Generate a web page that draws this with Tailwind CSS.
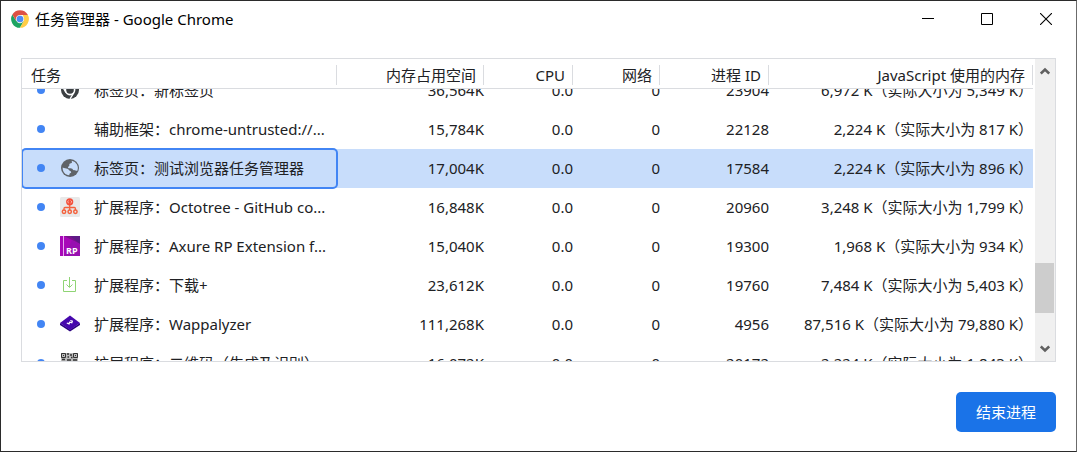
<!DOCTYPE html>
<html lang="zh-CN">
<head>
<meta charset="utf-8">
<title>任务管理器 - Google Chrome</title>
<script src="https://cdn.jsdelivr.net/npm/@tailwindcss/browser@4"></script>
</head>
<body class="flex min-h-screen flex-col border border-[#2b2b2b] border-r-[#6b6b6b] bg-white font-['Noto_Sans','Noto_Sans_CJK_SC',sans-serif] text-[15px] leading-5 text-[#202124]">
<header class="flex h-9 items-center justify-between pl-2.5 text-black">
  <h1 class="flex items-center gap-1.5">
    <svg class="size-[18px]" viewBox="0 0 48 48" aria-hidden="true">
      <circle cx="24" cy="24" r="23.5" fill="#fff"/>
      <path d="M3.6 12.2A23.5 23.5 0 0 0 24 47.5L34 30 24 24 14 29.5z" fill="#1da462"/>
      <path d="M44.4 12.2A23.5 23.5 0 0 1 24 47.5L34 29.5 32 13z" fill="#ffcd46"/>
      <path d="M3.6 12.2A23.5 23.5 0 0 1 44.4 12.2L44 13H24L14 29.5z" fill="#dd5144"/>
      <circle cx="24" cy="24" r="11" fill="#f1f1f1"/>
      <circle cx="24" cy="24" r="8.8" fill="#4c8bf5"/>
    </svg>
    <span>任务管理器 - Google Chrome</span>
  </h1>
  <div class="flex pr-px">
    <button aria-label="最小化" class="grid h-9 w-[59px] place-items-center"><svg class="size-3" viewBox="0 0 12 12" stroke="#000" shape-rendering="crispEdges"><path d="M0 5.5h12"/></svg></button>
    <button aria-label="最大化" class="grid h-9 w-[59px] place-items-center"><svg class="size-3" viewBox="0 0 12 12" fill="none" stroke="#000"><path d="M.5.5h11v11H.5z"/></svg></button>
    <button aria-label="关闭" class="grid h-9 w-[59px] place-items-center"><svg class="size-3" viewBox="0 0 12 12" stroke="#000" stroke-width="1.1"><path d="m0 0 12 12M12 0 0 12"/></svg></button>
  </div>
</header>

<main class="flex grow flex-col px-5 pt-[21px] pb-[19px]">
  <section class="flex border border-[#dadce0]">
    <div class="min-w-0 flex-1 pr-px">
      <table class="w-full table-fixed">
        <colgroup><col class="w-[315px]"><col class="w-[147px]"><col class="w-[89px]"><col class="w-[87px]"><col class="w-[109px]"><col></colgroup>
        <thead>
          <tr class="h-[29px] border-b border-[#dadce0] [&_div]:mt-[3px] [&_div]:border-r [&_div]:border-[#dadce0] [&_div]:pr-[7px] [&_div]:text-right [&_th]:p-0 [&_th]:font-normal">
            <th scope="col"><div class="pl-[9px] text-left!">任务</div></th>
            <th scope="col"><div>内存占用空间</div></th>
            <th scope="col"><div>CPU</div></th>
            <th scope="col"><div>网络</div></th>
            <th scope="col"><div>进程 ID</div></th>
            <th scope="col"><div>JavaScript 使用的内存</div></th>
          </tr>
        </thead>
      </table>
      <div class="h-[272px] overflow-hidden">
        <table class="-mt-[18px] w-full table-fixed whitespace-nowrap text-right [&_td]:p-0 [&_tr]:h-[39px]" aria-label="任务列表">
          <colgroup><col class="w-[315px]"><col class="w-[147px]"><col class="w-[89px]"><col class="w-[87px]"><col class="w-[109px]"><col></colgroup>
          <tbody>
            <tr>
              <td><div class="flex items-center pl-[15px]"><i class="mr-[15px] size-2 rounded-full bg-[#4285f4]"></i>
                <svg class="mr-3.5 size-5" viewBox="0 0 20 20" aria-hidden="true"><circle cx="10" cy="10" r="9" fill="#3c4043"/><circle cx="10" cy="10" r="4.6" fill="none" stroke="#fff" stroke-width="1.6"/><path d="M10 5.4h8.2M6 12.3 1.9 5.6M14 12.3 10 19" stroke="#fff" stroke-width="1.4"/></svg>
                <span>标签页：新标签页</span></div></td>
              <td>36,564K</td><td>0.0</td><td>0</td><td>23904</td><td>6,972 K（实际大小为 5,349 K）</td>
            </tr>
            <tr>
              <td><div class="flex items-center pl-[15px]"><i class="mr-[15px] size-2 rounded-full bg-[#4285f4]"></i>
                <i class="mr-3.5 size-5"></i>
                <span>辅助框架：chrome-untrusted://...</span></div></td>
              <td>15,784K</td><td>0.0</td><td>0</td><td>22128</td><td>2,224 K（实际大小为 817 K）</td>
            </tr>
            <tr class="bg-[#c8ddfb]" aria-selected="true">
              <td><div class="flex h-[39px] items-center rounded-sm pl-[15px] outline-2 -outline-offset-1 outline-[#4285f4]"><i class="mr-[15px] size-2 rounded-full bg-[#4285f4]"></i>
                <svg class="mr-3.5 size-5" viewBox="0 0 20 20" aria-hidden="true"><circle cx="10" cy="10" r="9" fill="#5f6368"/><path d="M11.8 2.8c-.2 1.300.6 1.500-.2 2.200-.8.6-2.100.3-2.300 1.400-.1 1 .4 1.700-.7 2.100-1 .2-.7 1.700.5 1.700 1.800 0 3.200 0 3.700 1.300.3 1 1.700.7 2.700.9.8.1 1.400.2 1.700.5a7.300 7.300 0 0 0-5.400-10.100zM2.700 9.400c-.4 4 2.300 7.400 6.600 7.900.2-1.300.3-1.800 1.300-2.200.9-.4.7-1.900-.4-2.200-1.300-.3-1.300-1.700-2.700-2.200-1.600-.5-3.200-.5-4.800-1.300z" fill="#c8ddfb"/></svg>
                <span>标签页：测试浏览器任务管理器</span></div></td>
              <td>17,004K</td><td>0.0</td><td>0</td><td>17584</td><td>2,224 K（实际大小为 896 K）</td>
            </tr>
            <tr>
              <td><div class="flex items-center pl-[15px]"><i class="mr-[15px] size-2 rounded-full bg-[#4285f4]"></i>
                <svg class="mr-3.5 size-5" viewBox="0 0 20 20" fill="none" stroke="#f4613c" aria-hidden="true"><rect width="20" height="20" rx="1.5" fill="#e9e9e9" stroke="none"/><circle cx="9.700" cy="4.800" r="3.600" fill="#f4503c" stroke="none"/><path d="m8.800 3.600-1.300 1.200 1.300 1.200M10.600 3.600l1.300 1.200-1.300 1.200" stroke="#fbd5cc" stroke-width=".8"/><path d="M9.700 8v5M4 13v-1.500q0-1 1-1h9.400q1 0 1 1V13" stroke-width="1.300"/><g stroke-width="1.500"><circle cx="4" cy="14.800" r="1.700"/><circle cx="9.700" cy="14.800" r="1.700"/><circle cx="15.400" cy="14.800" r="1.700"/></g></svg>
                <span>扩展程序：Octotree - GitHub co...</span></div></td>
              <td>16,848K</td><td>0.0</td><td>0</td><td>20960</td><td>3,248 K（实际大小为 1,799 K）</td>
            </tr>
            <tr>
              <td><div class="flex items-center pl-[15px]"><i class="mr-[15px] size-2 rounded-full bg-[#4285f4]"></i>
                <svg class="mr-3.5 size-5" viewBox="0 0 20 20" aria-hidden="true"><path d="M0 0h20v20H0z" fill="#a808b8"/><path d="M4 0h16v8L12 4z" fill="#7a128c"/><path d="m10 0 10 8V0z" fill="#5f1a86"/><path d="m4 20 8-16 8 4v12z" fill="#9710b0"/><path d="M3 0h1v20H3z" fill="#e6a8ee"/><text x="6" y="18" font-family="Open Sans" font-size="9" font-weight="700" fill="#fff">RP</text></svg>
                <span>扩展程序：Axure RP Extension f...</span></div></td>
              <td>15,040K</td><td>0.0</td><td>0</td><td>19300</td><td>1,968 K（实际大小为 934 K）</td>
            </tr>
            <tr>
              <td><div class="flex items-center pl-[15px]"><i class="mr-[15px] size-2 rounded-full bg-[#4285f4]"></i>
                <svg class="mr-3.5 size-5" viewBox="0 0 20 20" fill="none" stroke="#8fd474" aria-hidden="true"><path d="M7 5.500H3.500v11h12v-11H12M9.500 2v10M6.500 9.500l3 3 3-3"/></svg>
                <span>扩展程序：下载+</span></div></td>
              <td>23,612K</td><td>0.0</td><td>0</td><td>19760</td><td>7,484 K（实际大小为 5,403 K）</td>
            </tr>
            <tr>
              <td><div class="flex items-center pl-[15px]"><i class="mr-[15px] size-2 rounded-full bg-[#4285f4]"></i>
                <svg class="mr-3.5 size-5" viewBox="0 0 20 20" aria-hidden="true"><path d="m0 9 10 6.500L20 9v2L10 17.500 0 11z" fill="#2c0480"/><path d="m10 1.500 10 7.500-10 7L0 9z" fill="#4608ad"/><path d="m6.800 9 2.200.8.600-1.600 2.200.600.500-1.600-2-.700" fill="none" stroke="#fff" stroke-width="1.300"/></svg>
                <span>扩展程序：Wappalyzer</span></div></td>
              <td>111,268K</td><td>0.0</td><td>0</td><td>4956</td><td>87,516 K（实际大小为 79,880 K）</td>
            </tr>
            <tr>
              <td><div class="flex items-center pl-[15px]"><i class="mr-[15px] size-2 rounded-full bg-[#4285f4]"></i>
                <svg class="mr-3.5 size-5" viewBox="0 0 20 20" fill="none" stroke="#333" aria-hidden="true"><path d="M1 0h17v17H1z" fill="#bbb" stroke="none"/><path d="M1.500.5h4v4h-4zM13.500.5h4v4h-4zM1.500 12.500h4v4h-4zM3 2.500h1M15 2.500h1"/><path d="M7 1h2M10 2h2M7.500 4H9M11 4.500h1.500M2 6.500h3M7 7h4M13 7h4M8 10h3M13 10h2M9 12.500h3M14 13h3M8 15h4" stroke-width="1.300"/></svg>
                <span>扩展程序：二维码（生成及识别）</span></div></td>
              <td>16,072K</td><td>0.0</td><td>0</td><td>20172</td><td>2,224 K（实际大小为 1,843 K）</td>
            </tr>
          </tbody>
        </table>
      </div>
    </div>
    <div class="ml-px flex w-5 flex-col items-center bg-[#f0f0f0] pr-px">
      <button aria-label="向上滚动" class="grid h-6 w-full shrink-0 place-items-center"><svg class="h-2 w-2.5" viewBox="0 0 10 8" fill="none" stroke="#606060" stroke-width="2.600"><path d="m.8 6.500 4.200-4 4.200 4"/></svg></button>
      <div class="mt-[180px] h-[50px] w-[19px] bg-[#cdcdcd]"></div>
      <button aria-label="向下滚动" class="mt-auto grid h-6 w-full shrink-0 place-items-center"><svg class="h-2 w-2.5" viewBox="0 0 10 8" fill="none" stroke="#606060" stroke-width="2.600"><path d="m.8 1.500 4.200 4 4.200-4"/></svg></button>
    </div>
  </section>
  <footer class="mt-auto flex justify-end">
    <button class="h-10 rounded-[5px] bg-[#1a73e8] px-5 text-white">结束进程</button>
  </footer>
</main>
</body>
</html>
